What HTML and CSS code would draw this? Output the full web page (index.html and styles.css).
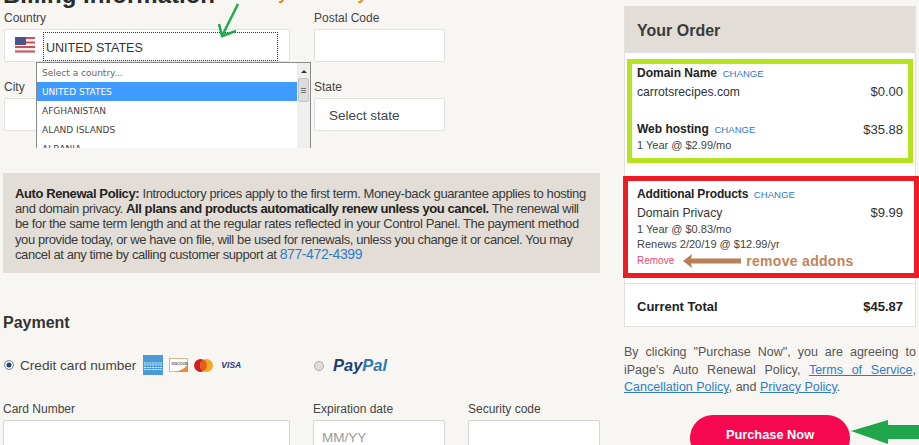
FILE: index.html
```html
<!DOCTYPE html>
<html lang="en">
<head>
    <meta charset="UTF-8">
    <title>Checkout</title>
    <link rel="stylesheet" href="styles.css">
</head>
<body>
    <div class="page">
        <div class="left">
            <h1>Billing Information</h1>
            <div class="note-top">Select your coutry here</div>
            <svg class="pen-arrow" width="26" height="36" viewBox="0 0 26 36"><path d="M21 1 L5 33 M2 21 L5 33 L19 28" fill="none" stroke="#22a94f" stroke-width="2.500"/></svg>

            <div class="form-grid">
                <div class="field country">
                    <label>Country</label>
                    <div class="box country-box">
                        <svg class="flag" width="20" height="16" viewBox="0 0 20 16">
                            <rect width="20" height="16" fill="#f4f0f0"/>
                            <path d="M0 1h20M0 5.500h20M0 10h20M0 14.500h20" stroke="#c8525c" stroke-width="2"/>
                            <rect width="11" height="8" fill="#4a5488"/>
                        </svg>
                        <div class="country-value">UNITED STATES</div>
                    </div>
                    <div class="dropdown">
                        <ul>
                            <li class="hint">Select a country...</li>
                            <li class="sel">UNITED STATES</li>
                            <li>AFGHANISTAN</li>
                            <li>ALAND ISLANDS</li>
                            <li>ALBANIA</li>
                        </ul>
                        <div class="scrollbar">
                            <span class="up"></span>
                            <span class="thumb"><i></i><i></i><i></i></span>
                        </div>
                    </div>
                </div>
                <div class="field">
                    <label>Postal Code</label>
                    <div class="box"></div>
                </div>
                <div></div>
                <div class="field">
                    <label>City</label>
                    <div class="box"></div>
                </div>
                <div class="field">
                    <label>State</label>
                    <div class="box state-box">Select state</div>
                </div>
            </div>

            <div class="renewal">
                <b>Auto Renewal Policy:</b> Introductory prices apply to the first term. Money-back guarantee applies to hosting and domain privacy. <b>All plans and products automatically renew unless you cancel.</b> The renewal will be for the same term length and at the regular rates reflected in your Control Panel. The payment method you provide today, or we have on file, will be used for renewals, unless you change it or cancel. You may cancel at any time by calling customer support at <a href="#">877-472-4399</a>
            </div>

            <h2>Payment</h2>
            <div class="pay-row">
                <div class="pay-card">
                    <span class="radio on"></span>
                    <span class="pay-label">Credit card number</span>
                    <svg class="card" width="20" height="20" viewBox="0 0 20 20">
                        <rect width="20" height="20" fill="#4b9ad8"/>
                        <path d="M1 8h18M1 10h18M1 12.500h18M1 14.500h18" stroke="#dcebf7" stroke-width="1" stroke-dasharray="2 .7"/>
                    </svg>
                    <svg class="card" width="19" height="14" viewBox="0 0 19 14">
                        <rect x=".5" y=".5" width="18" height="13" fill="#fff" stroke="#e2b48c"/>
                        <path d="M19 6 V14 H6 Q15 12 19 6z" fill="#ee8a32"/>
                        <text x="2.500" y="7" font-size="3.500" font-weight="700" font-family="Liberation Sans" fill="#555">DISCOVER</text>
                    </svg>
                    <svg class="card" width="19" height="13" viewBox="0 0 19 13">
                        <circle cx="6.500" cy="6.500" r="6.500" fill="#cf1f26"/>
                        <circle cx="12.500" cy="6.500" r="6.500" fill="#f5a623"/>
                        <path d="M9.500 .8 A6.500 6.500 0 0 1 9.500 12.200 A6.500 6.500 0 0 1 9.500 .8z" fill="#e2601f"/>
                    </svg>
                    <span class="visa">VISA</span>
                </div>
                <div class="pay-paypal">
                    <span class="radio"></span>
                    <span class="paypal"><b>Pay</b><i>Pal</i></span>
                </div>
            </div>

            <div class="card-grid">
                <div class="field">
                    <label>Card Number</label>
                    <div class="box tall"></div>
                </div>
                <div class="field">
                    <label>Expiration date</label>
                    <div class="box tall hint-text">MM/YY</div>
                </div>
                <div class="field">
                    <label>Security code</label>
                    <div class="box tall"></div>
                </div>
            </div>
        </div>

        <div class="right">
            <div class="order">
                <div class="order-head">Your Order</div>

                <div class="mark-green">
                    <div class="line"><span><b>Domain Name</b> <a href="#">CHANGE</a></span></div>
                    <div class="line item"><span>carrotsrecipes.com</span><span class="price">$0.00</span></div>
                    <div class="line hosting"><span><b>Web hosting</b> <a href="#">CHANGE</a></span><span class="price">$35.88</span></div>
                    <div class="line small">1 Year @ $2.99/mo</div>
                </div>

                <div class="mark-red">
                    <div class="line"><span><b>Additional Products</b> <a href="#">CHANGE</a></span></div>
                    <div class="line item"><span>Domain Privacy</span><span class="price">$9.99</span></div>
                    <div class="line small first">1 Year @ $0.83/mo</div>
                    <div class="line small">Renews 2/20/19 @ $12.99/yr</div>
                    <div class="line remove-row">
                        <a class="remove" href="#">Remove</a>
                        <svg width="58" height="16" viewBox="0 0 58 16"><path d="M0 8 L9 1 L8 5.500 H58 V10.500 H8 L9 15z" fill="#b97f56"/></svg>
                        <span class="remove-note">remove addons</span>
                    </div>
                </div>

                <div class="total"><span>Current Total</span><span>$45.87</span></div>
            </div>

            <p class="legal">By clicking "Purchase Now", you are agreeing to iPage's Auto Renewal Policy, <a href="#">Terms of Service</a>, <a href="#">Cancellation Policy</a>, and <a href="#">Privacy Policy</a>.</p>

            <button class="buy">Purchase Now</button>
            <svg class="buy-arrow" width="68" height="24" viewBox="0 0 68 24"><path d="M0 11 L37 0 V5 H68 V19 H37 V24z" fill="#1fa64a"/></svg>
        </div>
    </div>
</body>
</html>
```

FILE: styles.css
```css
html, body { margin: 0; padding: 0; height: 445px; overflow: hidden; }
body { background: #f8f6f2; font-family: "Liberation Sans", Arial, sans-serif; color: #333; font-size: 13px; }
a { color: #2f7bc8; text-decoration: none; }
.page { display: flex; align-items: flex-start; padding-left: 3px; }
.left { position: relative; width: 597px; margin-right: 24px; }
.right { position: relative; width: 292px; padding-top: 6px; }

h1 { margin: -20px 0 0; font-size: 24px; line-height: 29px; color: #2b2b2b; }
h2 { margin: 38px 0 0; font-size: 16px; line-height: 24px; color: #333; }
.note-top { position: absolute; left: 225px; top: -14px; color: #f47a20; font-size: 16px; font-weight: 700; font-style: italic; line-height: 18px; }
.pen-arrow { position: absolute; left: 214px; top: 3px; z-index: 3; }

.form-grid { display: grid; grid-template-columns: 286px 131px 132px; column-gap: 24px; row-gap: 16px; padding-left: 1px; }
.card-grid { display: grid; grid-template-columns: 287px 132px 132px; column-gap: 23px; margin-top: 24px; }
.field { position: relative; }
.field label { display: block; margin-bottom: 1px; font-size: 12px; line-height: 19px; color: #444; }
.box { height: 33px; box-sizing: border-box; background: #fff; border: 1px solid #e3e1dc; border-radius: 2px; }
.box.tall { height: 40px; border-color: #d8d6d0; }
.country-box { display: flex; align-items: center; padding: 2px 11px 0 10px; }
.flag { margin-right: 8px; margin-top: -4px; }
.country-value { flex: 1; height: 29px; margin-top: -1px; box-sizing: border-box; border: 1px dotted #333; padding-left: 2px; line-height: 30px; font-size: 12.500px; color: #333; }
.state-box { padding-left: 14px; line-height: 33px; font-size: 13.500px; color: #444; }
.hint-text { padding-left: 8px; line-height: 34px; font-size: 13.500px; color: #999; }

.dropdown { position: absolute; left: 32px; top: 53px; z-index: 2; width: 275px; height: 86px; box-sizing: border-box; display: flex; overflow: hidden; background: #fff; border: 1px solid #8a8a8a; border-bottom: 0; }
.dropdown ul { flex: 1; margin: 0; padding: 0; list-style: none; font-family: "DejaVu Sans", sans-serif; font-size: 9px; color: #444; }
.dropdown li { height: 19px; padding-left: 5px; line-height: 21px; }
.dropdown li.hint { color: #666; }
.dropdown li.sel { background: #3f9bff; color: #fff; }
.scrollbar { width: 13px; background: #efefef; display: flex; flex-direction: column; align-items: center; }
.scrollbar .up { width: 0; height: 0; margin: 7px 0 5px; border: 3px solid transparent; border-top: 0; border-bottom-color: #333; }
.scrollbar .thumb { width: 11px; height: 24px; box-sizing: border-box; display: flex; flex-direction: column; justify-content: center; gap: 1px; padding: 0 2px; background: #dcdcdc; border: 1px solid #c4c4c4; border-radius: 2px; }
.scrollbar .thumb i { height: 1px; background: #777; }

.renewal { margin-top: 42px; height: 100px; box-sizing: border-box; padding: 13px 12px 0; background: #e2ded7; font-size: 13px; line-height: 15.200px; letter-spacing: -.4px; color: #3a3a3a; }
.renewal b { color: #222; }
.renewal a { font-size: 14px; }

.pay-row { display: flex; align-items: center; height: 22px; margin-top: 19px; }
.pay-card { display: flex; align-items: center; width: 310px; padding-left: 1px; }
.pay-paypal { display: flex; align-items: center; margin-top: 1px; }
.radio { width: 10px; height: 10px; box-sizing: border-box; border-radius: 50%; background: #ddd; border: 1px solid #aaa; }
.radio.on { background: #24456e; box-shadow: inset 0 0 0 1.500px #fff; border-color: #8c97a5; }
.pay-label { margin: 0 7px 0 6px; font-size: 13.600px; color: #444; }
.card { margin-right: 6px; }
.visa { font-size: 8.500px; font-weight: 700; font-style: italic; color: #27367f; margin-left: 2px; }
.paypal { margin-left: 9px; font-size: 16.500px; font-style: italic; font-weight: 700; }
.paypal b { color: #1c3f78; }
.paypal i { color: #2d7ab4; }

.order { background: #fff; border: 1px solid #e3e1dc; border-top: 0; }
.order-head { height: 47px; padding-left: 12px; background: #e2ded7; font-size: 16px; font-weight: 700; line-height: 49px; color: #3a3a3a; }
.mark-green { margin: 6px 2px 0; height: 104px; box-sizing: border-box; padding: 1px 5px 0; border: 5px solid #b5e31f; }
.mark-red { margin: 13px -4px 0 -2px; height: 102px; box-sizing: border-box; padding: 5px 11px 0 9px; border: 5px solid #ed1c24; }
.mark-red b { letter-spacing: -.15px; }
.line { display: flex; justify-content: space-between; align-items: center; line-height: 16px; }
.line b { color: #222; font-size: 12px; }
.line a { margin-left: 2px; font-size: 9.600px; }
.item { margin-top: 2px; font-size: 12.200px; }
.hosting { margin-top: 21px; }
.price { font-size: 13px; }
.small { font-size: 11px; line-height: 15px; color: #444; }
.small.first { margin-top: 1px; }
.remove-row { justify-content: flex-start; }
.line a.remove { margin: 0 9px 0 0; font-size: 10px; color: #e8476f; }
.remove-note { margin: 1px 0 0 5px; font-size: 14px; font-weight: 700; color: #c08457; letter-spacing: .3px; white-space: nowrap; }
.total { display: flex; justify-content: space-between; margin-top: 5px; padding: 0 12px; height: 43px; box-sizing: border-box; border-top: 1px solid #e3e1dc; font-size: 13px; font-weight: 700; line-height: 45px; color: #222; }

.legal { margin: 17px 0 0; text-align: justify; font-size: 12.500px; line-height: 17.600px; color: #555; }
.legal a { text-decoration: underline; }
.buy { display: block; width: 160px; height: 46px; margin: 18px 0 0 66px; padding: 0 0 6px; border: 0; border-radius: 23px; background: #f5084f; color: #fff; font-family: "Liberation Sans", Arial, sans-serif; font-size: 12.800px; font-weight: 700; }
.buy-arrow { position: absolute; right: -3px; top: 420px; }
```
